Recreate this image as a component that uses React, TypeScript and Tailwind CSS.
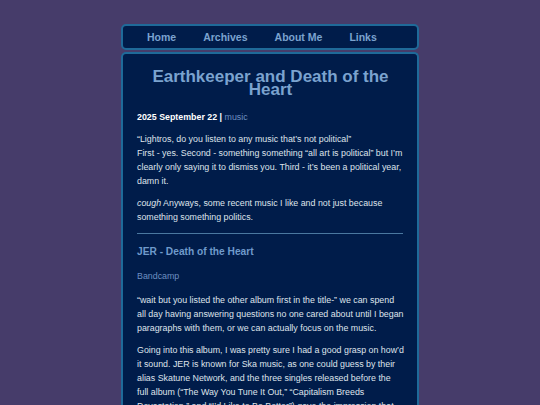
export default function App() {
  const nav = ['Home', 'Archives', 'About Me', 'Links']

  return (
    <div className="min-h-screen bg-[#463c6a] pt-[24px] font-['Liberation_Sans',Arial,sans-serif] text-[#dfe3ea]">
      <div className="mx-auto w-[298px]">
        {/* Nav */}
        <nav className="flex h-[26px] items-center gap-[27px] rounded-[5px] border-2 border-[#1f6a99] bg-[#001c4a] pl-[24px] pt-[1px] text-[10.5px] font-bold text-[#7ba3cf]">
          {nav.map((n) => (
            <a key={n} href="#">
              {n}
            </a>
          ))}
        </nav>

        {/* Post */}
        <article className="mt-[2px] rounded-t-[5px] border-2 border-b-0 border-[#1f6a99] bg-[#001c4a] pl-[14px] pr-[13px] pt-[16px] pb-6">
          <h1 className="text-center text-[17px] font-bold leading-[13px] text-[#7ba3cf]">
            Earthkeeper and Death of the Heart
          </h1>

          <p className="mt-[14px] text-[8.85px] leading-[14px]">
            <span className="font-bold text-white">2025 September 22 | </span>
            <a href="#" className="text-[#6d8fc0]">music</a>
          </p>

          <div className="mt-[8px] space-y-[8px] text-[8.85px] leading-[14px]">
            <p>
              “Lightros, do you listen to any music that’s not political”
              <br />
              First - yes. Second - something something “all art is political” but I’m clearly only
              saying it to dismiss you. Third - it’s been a political year, damn it.
            </p>
            <p>
              <em>cough</em> Anyways, some recent music I like and not just because something
              something politics.
            </p>
          </div>

          <hr className="mt-[9px] mr-[1px] border-t border-[#4a78a0]" />

          <h2 className="mt-[11px] text-[10.2px] font-bold leading-[14px] text-[#6f9acb]">
            JER - Death of the Heart
          </h2>

          <p className="mt-[10px] text-[8.85px] leading-[14px]">
            <a href="#" className="text-[#6d8fc0]">Bandcamp</a>
          </p>

          <div className="mt-[10px] space-y-[8px] text-[8.85px] leading-[14px]">
            <p>
              “wait but you listed the other album first in the title-” we can spend all day having
              answering questions no one cared about until I began paragraphs with them, or we can
              actually focus on the music.
            </p>
            <p>
              Going into this album, I was pretty sure I had a good grasp on how’d it sound. JER is
              known for Ska music, as one could guess by their alias Skatune Network, and the three
              singles released before the full album (“The Way You Tune It Out,” “Capitalism Breeds
              Devastation,” and “I’d Like to Be Better”) gave the impression that
            </p>
          </div>
        </article>
      </div>
    </div>
  )
}
